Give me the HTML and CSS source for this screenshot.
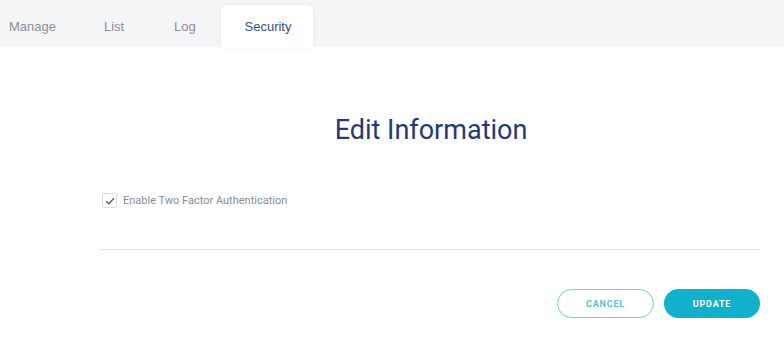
FILE: index.html
```html
<!DOCTYPE html>
<html lang="en">
<head>
    <meta charset="UTF-8">
    <meta name="viewport" content="width=device-width, initial-scale=1.0">
    <title>Security</title>
    <link rel="stylesheet" href="styles.css">
</head>
<body>
    <div class="tabs">
        <a class="tab tab-manage">Manage</a>
        <a class="tab tab-list">List</a>
        <a class="tab tab-log">Log</a>
        <a class="tab tab-security active">Security</a>
    </div>

    <div class="content">
        <h1>Edit Information</h1>

        <label class="check-row">
            <span class="checkbox">
                <svg width="10" height="8" viewBox="0 0 10 8">
                    <path d="M1 4.2 L3.8 6.8 L9 1.2" fill="none" stroke="#4a5a7a" stroke-width="1.3"/>
                </svg>
            </span>
            <span class="check-label">Enable Two Factor Authentication</span>
        </label>

        <hr class="divider">

        <div class="actions">
            <button class="btn btn-cancel">CANCEL</button>
            <button class="btn btn-update">UPDATE</button>
        </div>
    </div>
</body>
</html>
```

FILE: styles.css
```css
body {
    margin: 0;
    font-family: 'Liberation Sans', Arial, sans-serif;
    background-color: white;
}

.tabs {
    display: flex;
    align-items: flex-end;
    height: 47px;
    background-color: #f4f5f7;
}

.tab {
    display: block;
    height: 42px;
    line-height: 44px;
    font-size: 13px;
    color: #8b8f96;
    text-align: center;
    box-sizing: border-box;
}

.tab-manage {
    padding-left: 9px;
    width: 80px;
    text-align: left;
}

.tab-list {
    width: 83px;
    padding-left: 24px;
    text-align: left;
}

.tab-log {
    width: 58px;
    padding-left: 11px;
    text-align: left;
}

.tab-security {
    width: 92px;
    padding-left: 2px;
}

.tab.active {
    background-color: white;
    color: #3b4b8a;
    border-radius: 6px 6px 0 0;
    box-shadow: 0 0 6px rgba(0,0,0,0.05);
}

.content {
    padding: 0 24px 0 102px;
}

h1 {
    margin: 67px 0 0;
    font-family: Roboto, sans-serif;
    font-weight: 400;
    font-size: 27px;
    line-height: 32px;
    color: #1f3a7d;
    text-align: center;
}

.check-row {
    display: flex;
    align-items: center;
    margin-top: 47px;
    gap: 6px;
}

.checkbox {
    display: flex;
    align-items: center;
    justify-content: center;
    width: 13px;
    height: 13px;
    border: 1px solid #dcdcdc;
    border-radius: 2px;
}

.check-label {
    font-family: Roboto, sans-serif;
    font-size: 11px;
    color: #8a8c90;
}

.divider {
    margin: 41px 0 0 -2px;
    border: none;
    border-top: 1px solid #e3e3e3;
}

.actions {
    display: flex;
    justify-content: flex-end;
    gap: 10px;
    margin-top: 39px;
}

.btn {
    height: 29px;
    width: 97px;
    border-radius: 15px;
    font-family: Roboto, sans-serif;
    font-size: 9px;
    font-weight: 700;
    letter-spacing: 0.8px;
    cursor: pointer;
}

.btn-cancel {
    background-color: white;
    color: #55c3d8;
    border: 1px solid #6ccfe0;
}

.btn-update {
    background-color: #0fb1cb;
    color: white;
    border: none;
    width: 96px;
}
```
